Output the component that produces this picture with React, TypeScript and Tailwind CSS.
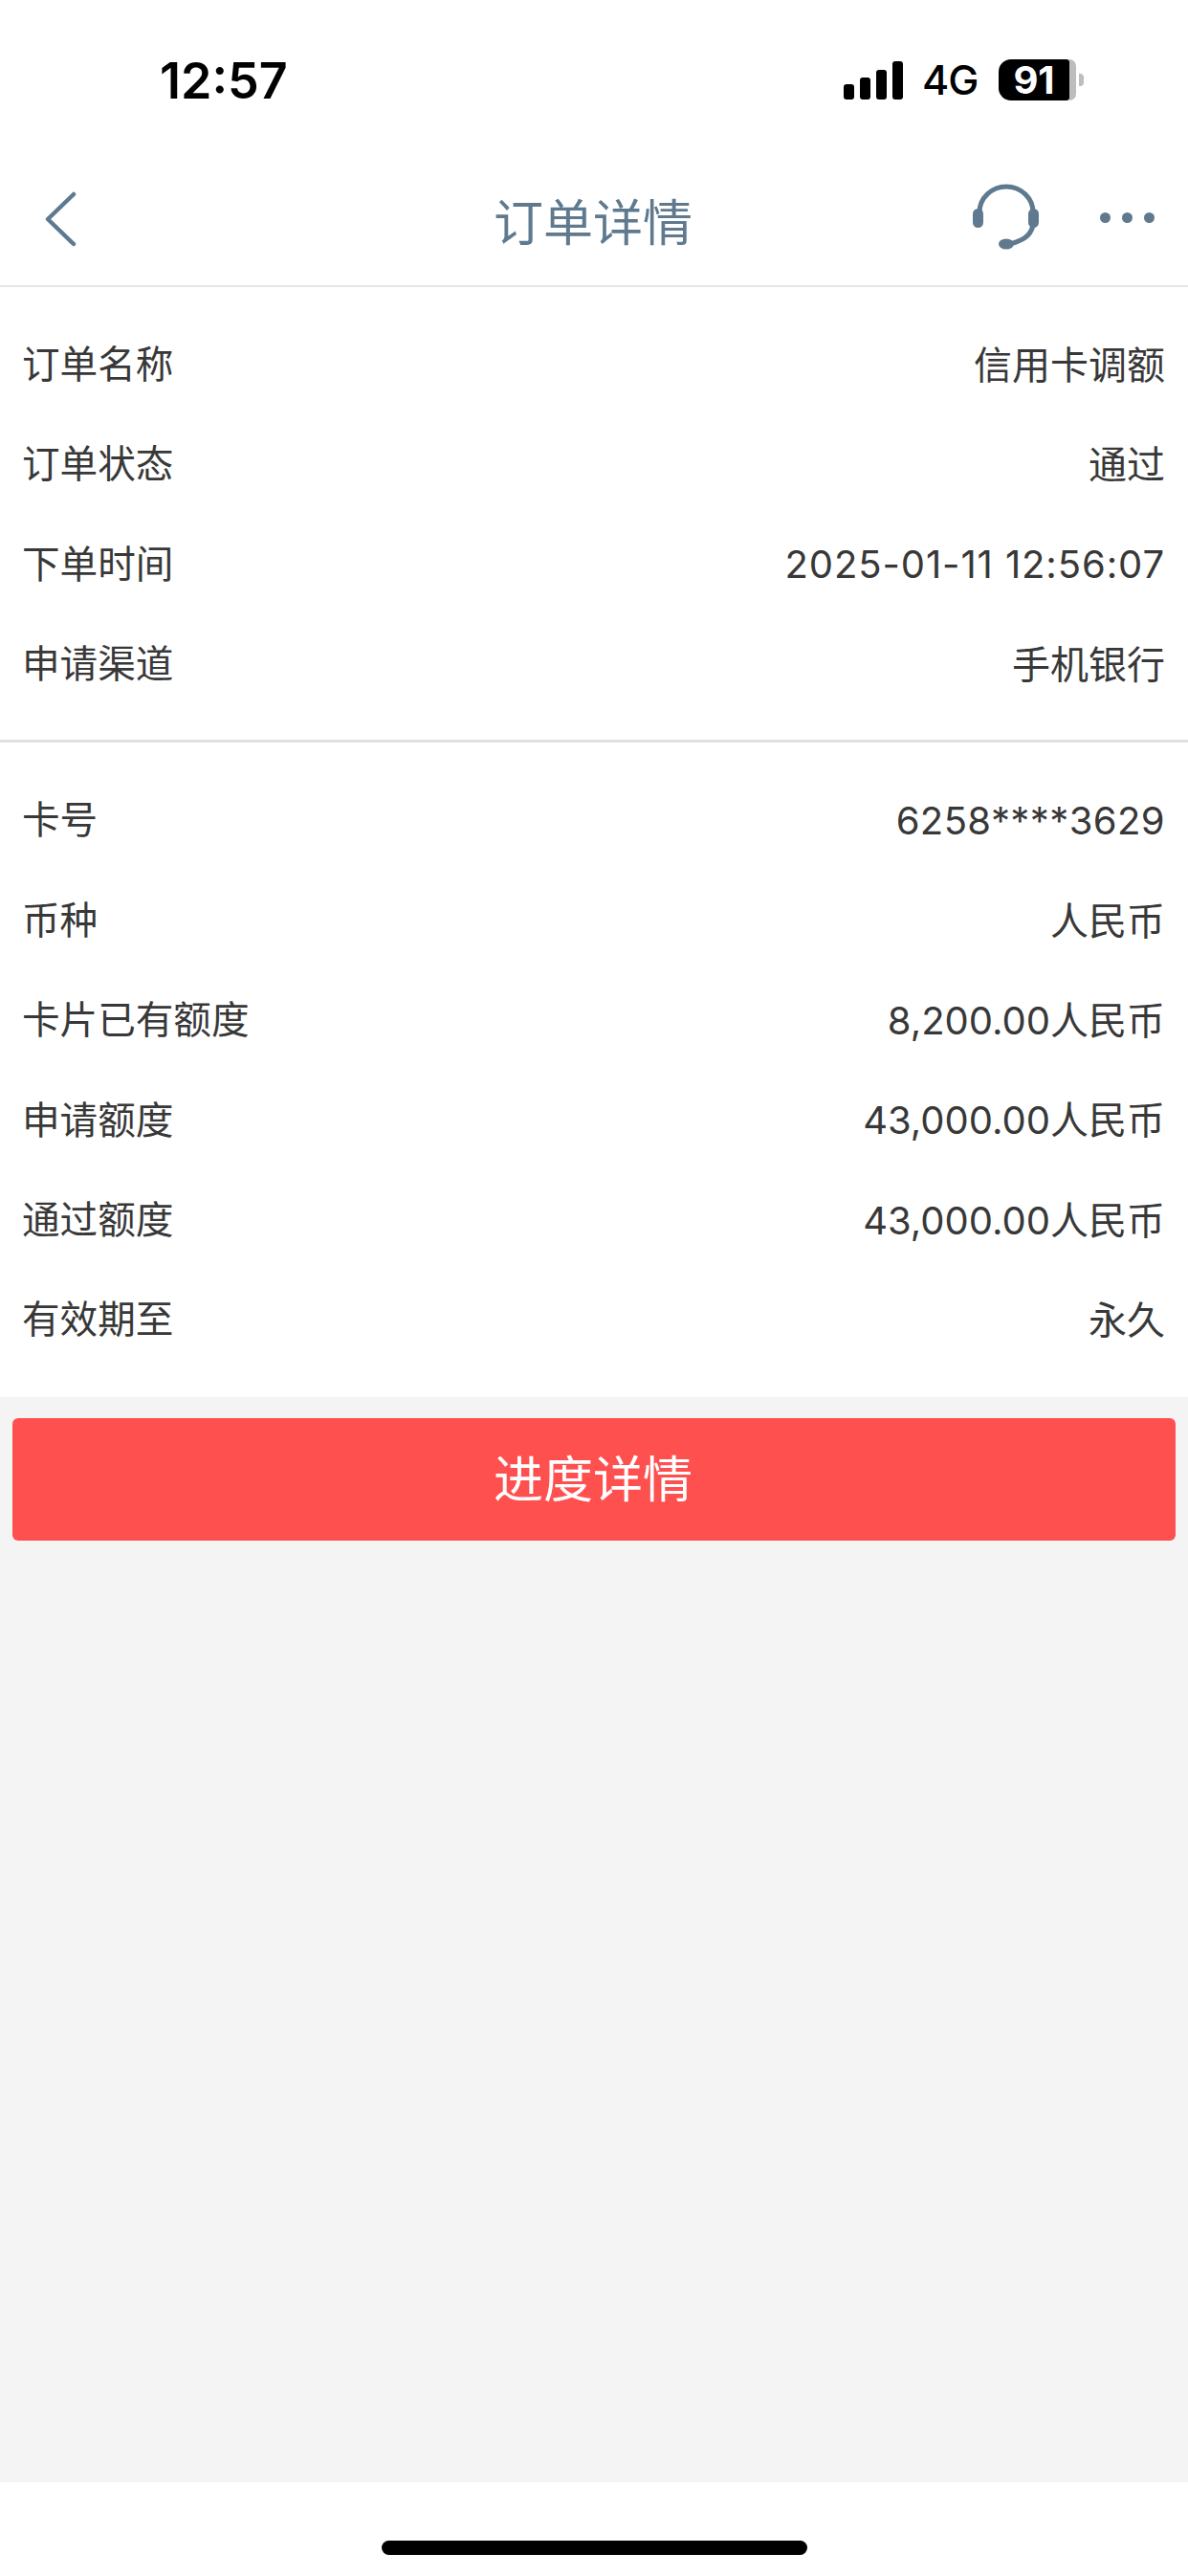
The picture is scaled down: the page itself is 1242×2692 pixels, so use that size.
const font = "font-['Inter','Noto_Sans_CJK_SC',sans-serif]"

const orderRows = [
  { label: '订单名称', value: '信用卡调额' },
  { label: '订单状态', value: '通过' },
  { label: '下单时间', value: '2025-01-11 12:56:07', spacing: 'tracking-[0.9px]' },
  { label: '申请渠道', value: '手机银行' },
]

const cardRows = [
  { label: '卡号', value: '6258****3629', spacing: 'tracking-[0.4px]' },
  { label: '币种', value: '人民币' },
  { label: '卡片已有额度', value: '8,200.00人民币' },
  { label: '申请额度', value: '43,000.00人民币' },
  { label: '通过额度', value: '43,000.00人民币' },
  { label: '有效期至', value: '永久' },
]

function Row({ label, value, spacing }: { label: string; value: string; spacing?: string }) {
  return (
    <div className="flex h-[104.4px] items-center justify-between pr-[24px] pb-[1px] pl-[23px] text-[39.6px] leading-none text-[#383838]">
      <span>{label}</span>
      <span className={`text-[40px] ${spacing ?? ''}`}>{value}</span>
    </div>
  )
}

function StatusBar() {
  return (
    <div className="flex h-[172px] items-start justify-between bg-white pt-[56px] pr-[109px] pl-[167px]">
      <span className="font-['Inter',sans-serif] text-[52px] leading-[58px] font-semibold text-black">12:57</span>
      <div className="mt-[6px] flex items-center">
        <svg width="62" height="40" viewBox="0 0 62 40" fill="#000">
          <rect x="0" y="24" width="11" height="16" rx="3" />
          <rect x="17" y="17" width="11" height="23" rx="3" />
          <rect x="34" y="9" width="11" height="31" rx="3" />
          <rect x="51" y="0" width="11" height="40" rx="3" />
        </svg>
        <span className="ml-[20px] w-[57px] font-['Inter',sans-serif] text-[43px] leading-none font-medium tracking-[-1px] text-black">4G</span>
        <div className="ml-[23px] flex h-[43px] w-[74px] items-center justify-center rounded-l-[13px] rounded-r-[3px] bg-black">
          <span className="font-['Inter',sans-serif] text-[40px] leading-none font-bold text-white">91</span>
        </div>
        <div className="h-[43px] w-[7px] rounded-r-[10px] bg-[#bdbdbd]" />
        <div className="ml-[3px] h-[13px] w-[5px] rounded-r-[4px] bg-[#bdbdbd]" />
      </div>
    </div>
  )
}

function NavBar() {
  return (
    <div className="relative flex h-[128px] items-center justify-center border-b-[2px] border-[#e5e5e5] bg-white">
      <svg className="absolute top-[28px] left-[46px]" width="34" height="58" viewBox="0 0 34 58" fill="none" stroke="#5f7a8f" strokeWidth="4.5" strokeLinecap="round" strokeLinejoin="round">
        <path d="M31 3 L4 29 L31 55" />
      </svg>
      <span className="pr-[2px] pb-[2px] text-[52px] leading-none text-[#5f7a8f]">订单详情</span>
      <svg className="absolute top-[20px] left-[1015px]" width="74" height="72" viewBox="0 0 74 72" fill="none">
        <path d="M9 30 A28 27 0 0 1 65 30 V42 C64 53 54 60 40 63" stroke="#5f7a8f" strokeWidth="5" />
        <rect x="2" y="26" width="11" height="20" rx="5.5" fill="#5f7a8f" />
        <rect x="60" y="26" width="11" height="20" rx="5.5" fill="#5f7a8f" />
        <ellipse cx="37" cy="63" rx="8" ry="5.5" fill="#5f7a8f" />
      </svg>
      <div className="absolute top-[50px] left-[1150px] flex gap-[12px]">
        <div className="h-[11px] w-[11px] rounded-full bg-[#5f7a8f]" />
        <div className="h-[11px] w-[11px] rounded-full bg-[#5f7a8f]" />
        <div className="h-[11px] w-[11px] rounded-full bg-[#5f7a8f]" />
      </div>
    </div>
  )
}

export default function App() {
  return (
    <div className={`flex h-[2692px] w-[1242px] flex-col overflow-hidden bg-[#f4f4f4] ${font}`}>
      <StatusBar />
      <NavBar />
      <div className="border-b-[3px] border-[#e0e0e0] bg-white pt-[30px] pb-[25px]">
        {orderRows.map((row) => (
          <Row key={row.label} {...row} />
        ))}
      </div>
      <div className="bg-white pt-[31px] pb-[27px]">
        {cardRows.map((row) => (
          <Row key={row.label} {...row} />
        ))}
      </div>
      <div className="px-[13px] pt-[22px]">
        <button className="flex h-[128px] w-full items-center justify-center rounded-[6px] bg-[#ff5050] pt-[2px] pr-[2px] text-[52px] leading-none text-white">
          进度详情
        </button>
      </div>
      <div className="mt-auto flex h-[98px] justify-center bg-white pt-[61px]">
        <div className="h-[15px] w-[445px] rounded-full bg-black" />
      </div>
    </div>
  )
}
